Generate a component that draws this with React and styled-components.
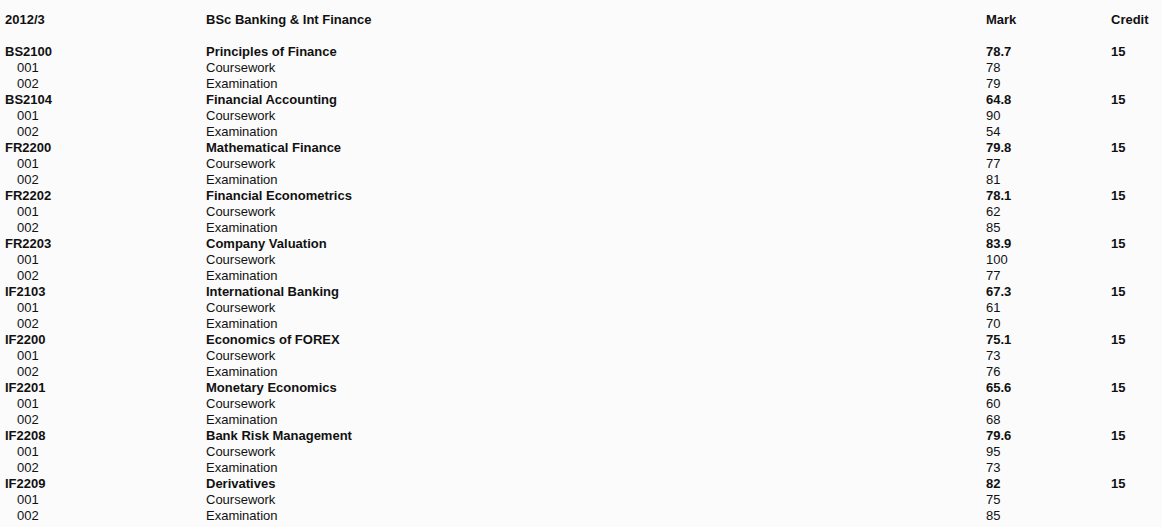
import React from "react";
import styled, { createGlobalStyle } from "styled-components";

const Global = createGlobalStyle`
  html, body { margin: 0; padding: 0; background: #fbfbfb; }
  body { font-family: "Liberation Sans", Arial, sans-serif; font-size: 13px; color: #111; }
`;

const Page = styled.div`
  padding: 12px 0 0 5px;
`;

const Grid = styled.div`
  display: grid;
  grid-template-columns: 201px 780px 125px 1fr;
  grid-auto-rows: 16px;
  line-height: 16px;
`;

const Cell = styled.div`
  font-weight: ${(p) => (p.$bold ? "bold" : "normal")};
  padding-left: ${(p) => (p.$indent ? "12px" : "0")};
  white-space: nowrap;
`;

const Spacer = styled.div`
  grid-column: 1 / -1;
`;

const modules = [
  ["BS2100", "Principles of Finance", "78.7", "78", "79"],
  ["BS2104", "Financial Accounting", "64.8", "90", "54"],
  ["FR2200", "Mathematical Finance", "79.8", "77", "81"],
  ["FR2202", "Financial Econometrics", "78.1", "62", "85"],
  ["FR2203", "Company Valuation", "83.9", "100", "77"],
  ["IF2103", "International Banking", "67.3", "61", "70"],
  ["IF2200", "Economics of FOREX", "75.1", "73", "76"],
  ["IF2201", "Monetary Economics", "65.6", "60", "68"],
  ["IF2208", "Bank Risk Management", "79.6", "95", "73"],
  ["IF2209", "Derivatives", "82", "75", "85"],
];

export default function App() {
  return (
    <Page>
      <Global />
      <Grid>
        <Cell $bold>2012/3</Cell>
        <Cell $bold>BSc Banking &amp; Int Finance</Cell>
        <Cell $bold>Mark</Cell>
        <Cell $bold>Credit</Cell>
        <Spacer />
        {modules.map(([code, name, mark, cw, ex]) => (
          <React.Fragment key={code}>
            <Cell $bold>{code}</Cell>
            <Cell $bold>{name}</Cell>
            <Cell $bold>{mark}</Cell>
            <Cell $bold>15</Cell>
            <Cell $indent>001</Cell>
            <Cell>Coursework</Cell>
            <Cell>{cw}</Cell>
            <Cell />
            <Cell $indent>002</Cell>
            <Cell>Examination</Cell>
            <Cell>{ex}</Cell>
            <Cell />
          </React.Fragment>
        ))}
      </Grid>
    </Page>
  );
}
